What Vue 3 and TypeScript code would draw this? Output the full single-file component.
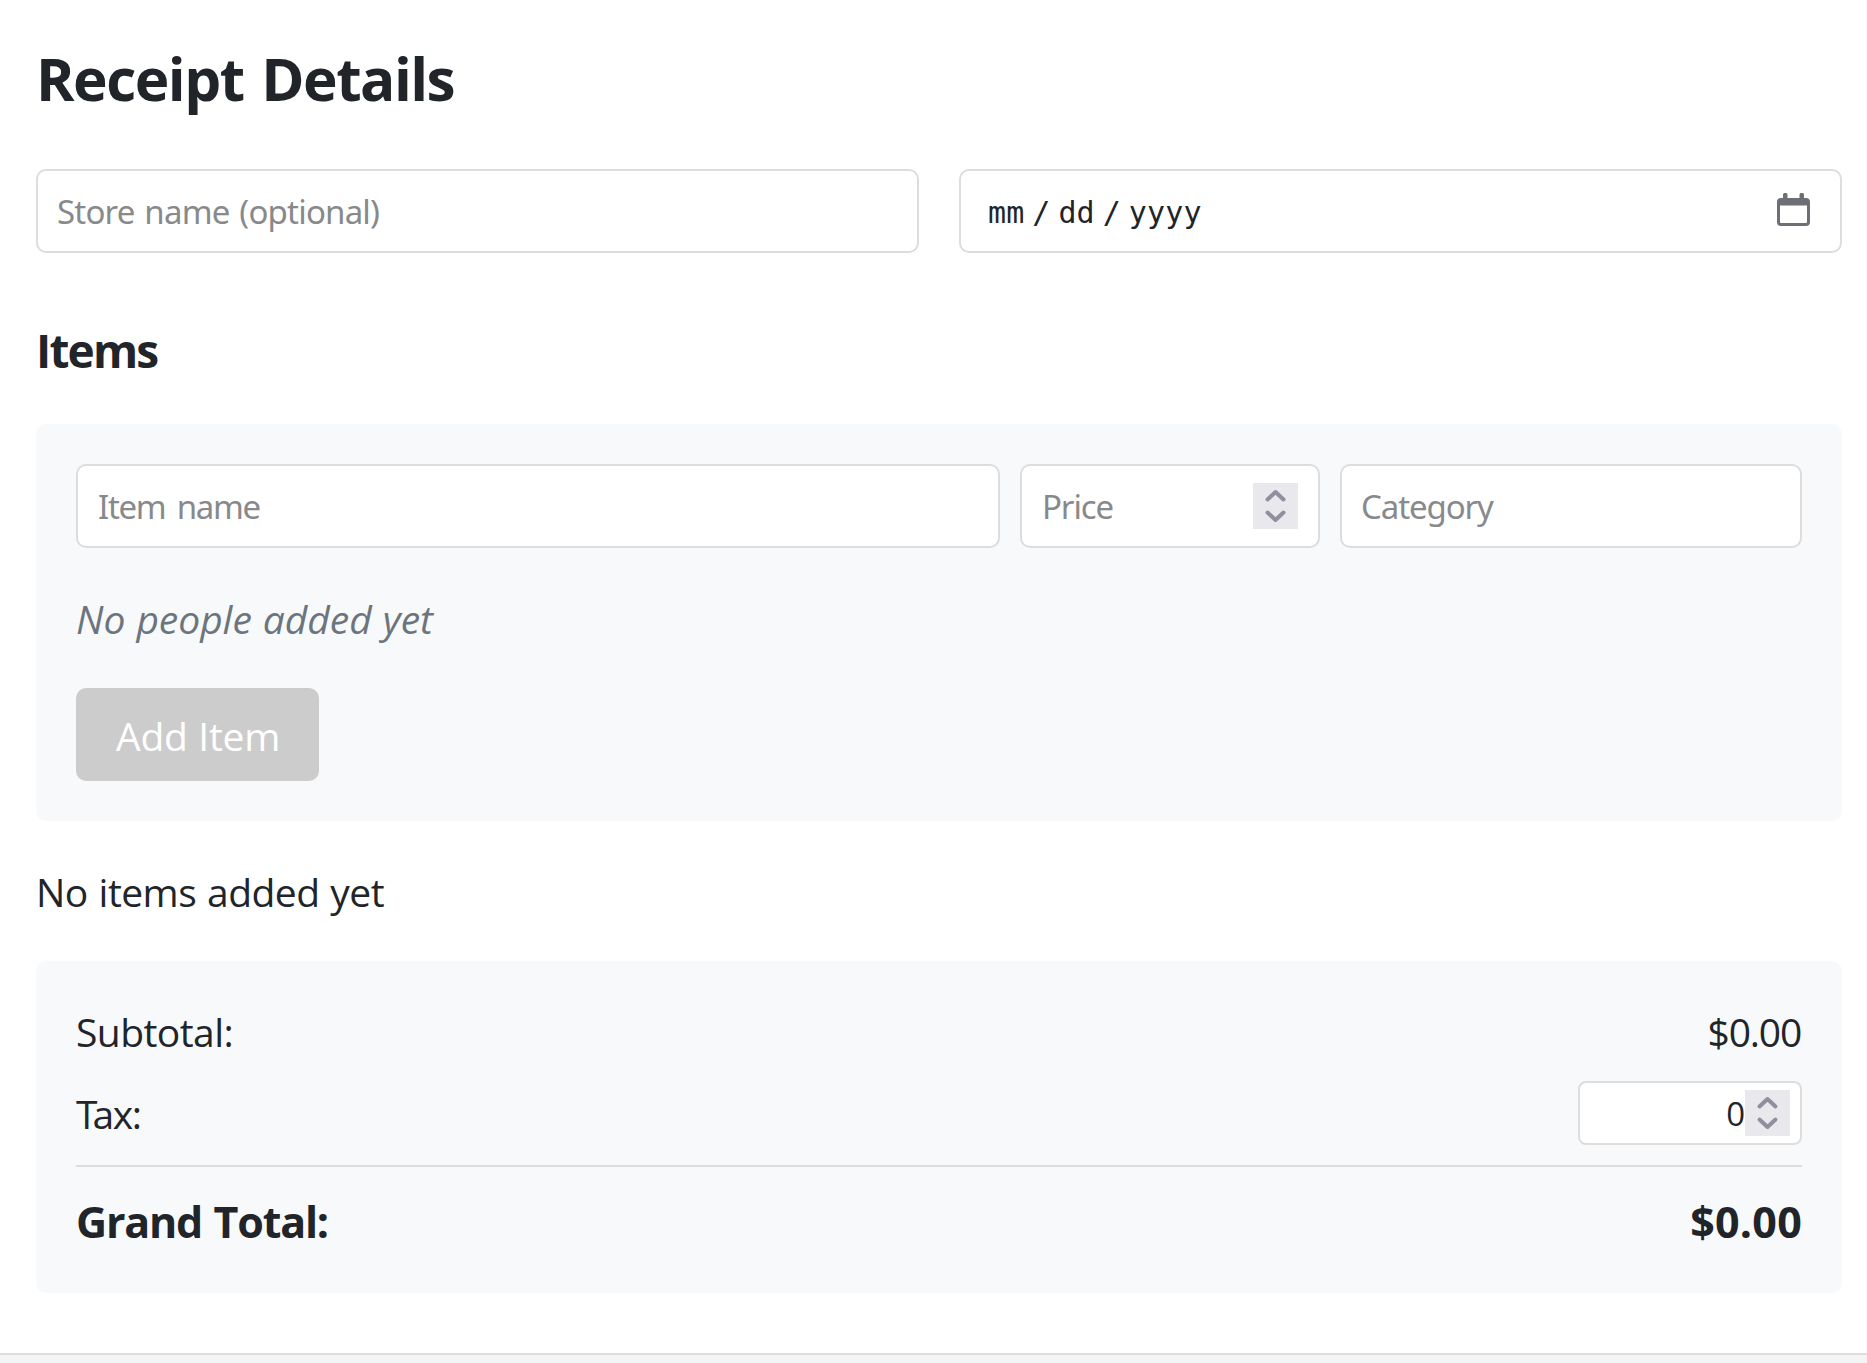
<script setup lang="ts">
import { computed, ref } from 'vue'

const storeName = ref('')
const itemName = ref('')
const category = ref('')
const subtotal = ref(0)
const tax = ref(0)

const money = (value: number): string => `$${value.toFixed(2)}`
const grandTotal = computed(() => subtotal.value + tax.value)
</script>

<template>
  <main class="card">
    <h1>Receipt Details</h1>

    <div class="details">
      <input v-model="storeName" class="field store" type="text" placeholder="Store name (optional)" />
      <div class="field date">
        <span class="part">mm</span>
        <span class="slash">/</span>
        <span class="part">dd</span>
        <span class="slash">/</span>
        <span class="part">yyyy</span>
        <svg class="calendar" viewBox="0 0 33 33" width="33" height="33">
          <path
            fill="#6c7074"
            fill-rule="evenodd"
            d="M6 5V2a2 2 0 0 1 4.500 0V5H22.500V2a2 2 0 0 1 4.500 0V5H29a4 4 0 0 1 4 4V29a4 4 0 0 1-4 4H4a4 4 0 0 1-4-4V9a4 4 0 0 1 4-4ZM3 12.500V29a1 1 0 0 0 1 1H29a1 1 0 0 0 1-1V12.500Z"
          />
        </svg>
      </div>
    </div>

    <h2>Items</h2>

    <section class="panel entry">
      <div class="entry-row">
        <input v-model="itemName" class="field item" type="text" placeholder="Item name" />
        <div class="field number">
          <span class="hint">Price</span>
          <svg class="spinner" viewBox="0 0 45 46" width="45" height="46">
            <path d="M14.500 16.500L22.500 9L30.500 16.500M14.500 29.500L22.500 37L30.500 29.500" />
          </svg>
        </div>
        <input v-model="category" class="field category" type="text" placeholder="Category" />
      </div>
      <p class="no-people">No people added yet</p>
      <button type="button" disabled>Add Item</button>
    </section>

    <p class="no-items">No items added yet</p>

    <section class="panel totals">
      <div class="line">
        <span class="subtotal">Subtotal:</span>
        <span class="amount">{{ money(subtotal) }}</span>
      </div>
      <div class="line tax-line">
        <span class="tax"><span class="tee">T</span>ax:</span>
        <div class="tax-field">
          <span>{{ tax }}</span>
          <svg class="spinner" viewBox="0 0 45 46" width="45" height="46">
            <path d="M14.500 16.500L22.500 9L30.500 16.500M14.500 29.500L22.500 37L30.500 29.500" />
          </svg>
        </div>
      </div>
      <div class="line grand">
        <span>Grand Total:</span>
        <span class="grand-amount">{{ money(grandTotal) }}</span>
      </div>
    </section>
  </main>
</template>

<style>
body {
  background: #f3f4f5;
  overflow: hidden;
}
</style>

<style scoped>
* {
  box-sizing: border-box;
}

.card {
  height: 1355px;
  padding: 45px 25px 0 36px;
  border-bottom: 2px solid #ddd;
  background: #fff;
  box-shadow: 0 5px 10px rgba(0, 0, 0, 0.08);
  color: #212529;
  font-family: 'Open Sans', 'Noto Sans', sans-serif;
  font-size: 39px;
}

h1 {
  height: 66px;
  margin: 0 0 58px;
  font-size: 58.5px;
  line-height: 66px;
  letter-spacing: -1.5px;
  word-spacing: 4px;
}

.details {
  display: grid;
  grid-template-columns: 1fr 1fr;
  gap: 40px;
}

.field {
  display: block;
  width: 100%;
  min-width: 0;
  height: 84px;
  margin: 0;
  padding: 0 20px;
  border: 2px solid #ddd;
  border-radius: 10px;
  outline: none;
  background: #fff;
  color: #212529;
  font-family: 'Noto Sans', sans-serif;
  font-size: 33px;
}

.field::placeholder,
.hint {
  color: #88898b;
  opacity: 1;
}

.store {
  padding-left: 19px;
  letter-spacing: -0.8px;
  word-spacing: 2px;
}

.item {
  letter-spacing: -1.3px;
  word-spacing: 4px;
}

.category {
  padding-left: 19px;
  letter-spacing: -1.1px;
}

.date {
  display: flex;
  align-items: center;
  padding: 2px 30px 0 27px;
  font-family: 'DejaVu Sans Mono', monospace;
  font-size: 30px;
  letter-spacing: 0.14px;
}

.slash {
  width: 34px;
  text-align: center;
}

.calendar {
  margin: -5px 0 0 auto;
}

h2 {
  height: 60px;
  margin: 67px 0 44px;
  font-size: 46px;
  line-height: 60px;
  letter-spacing: -1.8px;
}

.panel {
  border-radius: 10px;
  background: #f8f9fb;
}

.entry {
  height: 397px;
  padding: 40px;
}

.entry-row {
  display: grid;
  grid-template-columns: 2fr 300px 1fr;
  gap: 20px;
}

.number {
  display: flex;
  align-items: center;
  justify-content: space-between;
  padding-top: 0;
}

.hint {
  letter-spacing: -1.1px;
}

.spinner {
  flex: none;
  background: #e9e8ed;
}

.spinner path {
  fill: none;
  stroke: #8f8f9d;
  stroke-width: 4;
  stroke-linecap: round;
  stroke-linejoin: round;
}

.no-people {
  height: 60px;
  margin: 41px 0 39px;
  color: #6c757d;
  font-style: italic;
  line-height: 60px;
  letter-spacing: -0.05px;
  word-spacing: 1px;
}

button {
  display: block;
  width: 243px;
  height: 93px;
  padding: 1px 0 0 1px;
  border: 0;
  border-radius: 10px;
  background: #ccc;
  color: #fff;
  font: inherit;
  letter-spacing: -0.3px;
  word-spacing: 1px;
}

.no-items {
  height: 60px;
  margin: 41px 0 39px;
  line-height: 60px;
  letter-spacing: -0.55px;
  word-spacing: 1.3px;
}

.totals {
  height: 332px;
  padding: 40px;
}

.line {
  display: flex;
  align-items: center;
  justify-content: space-between;
  height: 60px;
  line-height: 60px;
}

.subtotal,
.amount,
.tax {
  padding-top: 2px;
}

.subtotal {
  letter-spacing: -0.56px;
}

.amount {
  padding-right: 1px;
  letter-spacing: -1.2px;
}

.tax-line {
  height: 64px;
  margin-top: 20px;
}

.tax {
  letter-spacing: -1.4px;
}

.tee {
  letter-spacing: -5px;
}

.tax-field {
  display: flex;
  align-items: center;
  justify-content: flex-end;
  width: 224px;
  height: 64px;
  padding-right: 10px;
  border: 2px solid #ddd;
  border-radius: 8px;
  background: #fff;
  font-size: 33px;
}

.tax-field span {
  padding-top: 2px;
}

.grand {
  height: 88px;
  margin-top: 20px;
  padding-top: 24px;
  border-top: 2px solid #ddd;
  font-size: 43px;
  font-weight: 700;
  letter-spacing: -1.2px;
  word-spacing: 1.5px;
}

.grand-amount {
  letter-spacing: 0.25px;
}
</style>
